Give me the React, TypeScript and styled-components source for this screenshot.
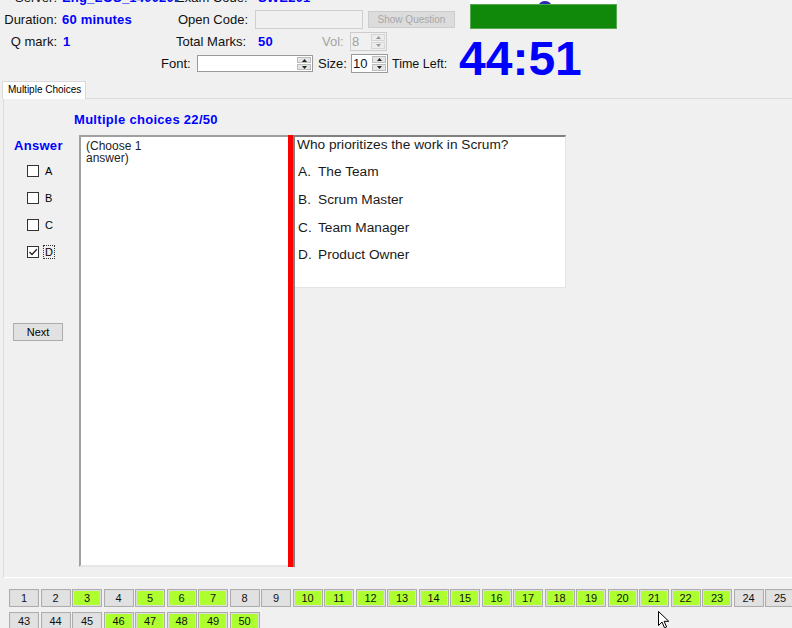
import React from "react";
import styled, { createGlobalStyle } from "styled-components";

const GlobalStyle = createGlobalStyle`
  html, body { margin: 0; padding: 0; background: #f0f0f0; }
  body { font-family: "Liberation Sans", Arial, sans-serif; color: #000; }
  * { box-sizing: border-box; }
`;

const BLUE = "#0000ff";
const LIME = "#adff2f";

const Screen = styled.div`
  position: relative;
  width: 792px;
  height: 628px;
  overflow: hidden;
  background: #f0f0f0;
  display: flex;
  flex-direction: column;
`;

const Header = styled.div`
  display: flex;
  align-items: flex-start;
  height: 89px;
  margin-top: -14px;
  flex-shrink: 0;
`;

const InfoRows = styled.div`
  width: 459px;
  display: flex;
  flex-direction: column;
  flex-shrink: 0;
`;

const InfoRow = styled.div<{ $h?: number }>`
  display: flex;
  align-items: center;
  height: ${(p) => p.$h ?? 22}px;
`;

const Label = styled.span<{ $w?: number; $right?: boolean; $muted?: boolean; $size?: number }>`
  flex-shrink: 0;
  ${(p) => (p.$w ? `width: ${p.$w}px;` : "")}
  text-align: ${(p) => (p.$right ? "right" : "left")};
  font-size: ${(p) => p.$size ?? 13}px;
  color: ${(p) => (p.$muted ? "#a3a3a3" : "#111")};
  white-space: nowrap;
`;

const Value = styled.span<{ $w?: number }>`
  flex-shrink: 0;
  ${(p) => (p.$w ? `width: ${p.$w}px;` : "")}
  font-size: 13px;
  font-weight: bold;
  color: ${BLUE};
  white-space: nowrap;
  letter-spacing: 0.2px;
`;

const Gap = styled.span<{ $w: number }>`
  flex-shrink: 0;
  width: ${(p) => p.$w}px;
`;

const TextBox = styled.div<{ $w: number; $h: number }>`
  flex-shrink: 0;
  width: ${(p) => p.$w}px;
  height: ${(p) => p.$h}px;
  background: #f0f0f0;
  border: 1px solid #cfcfcf;
`;

const FlatButton = styled.div<{ $w: number; $h: number; $disabled?: boolean }>`
  flex-shrink: 0;
  width: ${(p) => p.$w}px;
  height: ${(p) => p.$h}px;
  display: flex;
  align-items: center;
  justify-content: center;
  font-size: 10px;
  color: ${(p) => (p.$disabled ? "#a8a8a8" : "#111")};
  background: ${(p) => (p.$disabled ? "#dcdcdc" : "#e1e1e1")};
  border: 1px solid ${(p) => (p.$disabled ? "#cdcdcd" : "#adadad")};
`;

const SpinBox = styled.div<{ $w: number; $h: number; $disabled?: boolean }>`
  flex-shrink: 0;
  width: ${(p) => p.$w}px;
  height: ${(p) => p.$h}px;
  display: flex;
  background: ${(p) => (p.$disabled ? "#f0f0f0" : "#fff")};
  border: 1px solid ${(p) => (p.$disabled ? "#cccccc" : "#9a9a9a")};
`;

const SpinText = styled.span<{ $disabled?: boolean }>`
  flex: 1;
  display: flex;
  align-items: center;
  padding-left: 1px;
  font-size: 13px;
  color: ${(p) => (p.$disabled ? "#a0a0a0" : "#111")};
`;

const SpinButtons = styled.div`
  width: 15px;
  display: flex;
  flex-direction: column;
  gap: 1px;
  padding: 1px 1px 1px 0;
`;

const SpinHalf = styled.div<{ $disabled?: boolean }>`
  flex: 1;
  display: flex;
  align-items: center;
  justify-content: center;
  background: ${(p) => (p.$disabled ? "#ececec" : "#e5e5e5")};
  border: 1px solid ${(p) => (p.$disabled ? "#d6d6d6" : "#bdbdbd")};
`;

const Tri = ({ up, color }: { up: boolean; color: string }) => (
  <svg width="5" height="3" viewBox="0 0 5 3">
    {up ? <path d="M0 3 L2.5 0 L5 3 Z" fill={color} /> : <path d="M0 0 L2.5 3 L5 0 Z" fill={color} />}
  </svg>
);

const Spinner = ({ w, h, value, disabled }: { w: number; h: number; value: string; disabled?: boolean }) => (
  <SpinBox $w={w} $h={h} $disabled={disabled}>
    <SpinText $disabled={disabled}>{value}</SpinText>
    <SpinButtons>
      <SpinHalf $disabled={disabled}>
        <Tri up color={disabled ? "#9a9a9a" : "#222"} />
      </SpinHalf>
      <SpinHalf $disabled={disabled}>
        <Tri up={false} color={disabled ? "#9a9a9a" : "#222"} />
      </SpinHalf>
    </SpinButtons>
  </SpinBox>
);

const StatusColumn = styled.div`
  display: flex;
  flex-direction: column;
`;

const StatusBox = styled.div`
  margin-left: 11px;
  width: 147px;
  height: 18px;
  background: #fff;
  display: flex;
  align-items: flex-end;
  justify-content: center;
  overflow: hidden;
`;

const StatusDot = styled.span`
  width: 12px;
  height: 8px;
  margin-bottom: -5px;
  margin-left: 3px;
  border-radius: 50%;
  background: #2a2ab8;
`;

const GreenBar = styled.div`
  margin-left: 11px;
  width: 147px;
  height: 25px;
  background: #10890a;
  border: 1px solid #58a852;
`;

const Timer = styled.div`
  margin-top: 6px;
  font-size: 48px;
  line-height: 48px;
  font-weight: bold;
  color: ${BLUE};
  white-space: nowrap;
`;

const TabStrip = styled.div`
  display: flex;
  margin-top: 6px;
  padding-left: 2px;
  flex-shrink: 0;
`;

const Tab = styled.div`
  position: relative;
  z-index: 1;
  width: 84px;
  height: 18px;
  margin-bottom: -1px;
  padding: 2px 0 0 5px;
  font-size: 10px;
  background: #fff;
  border: 1px solid #d9d9d9;
  border-bottom: none;
  white-space: nowrap;
`;

const TabPanel = styled.div`
  margin-left: 3px;
  width: 800px;
  flex-shrink: 0;
  border: 1px solid #dcdcdc;
  border-bottom-color: #ffffff;
  padding: 13px 0 10px 0;
  background: #f0f0f0;
`;

const SectionTitle = styled.div`
  padding-left: 70px;
  font-size: 13px;
  line-height: 16px;
  font-weight: bold;
  letter-spacing: 0.3px;
  color: ${BLUE};
`;

const BodyRow = styled.div`
  margin-top: 7px;
  height: 432px;
  display: flex;
`;

const AnswerColumn = styled.div`
  width: 75px;
  flex-shrink: 0;
  display: flex;
  flex-direction: column;
  padding-left: 10px;
`;

const AnswerHeading = styled.div`
  margin-top: 3px;
  font-size: 13px;
  line-height: 16px;
  font-weight: bold;
  letter-spacing: 0.3px;
  color: ${BLUE};
`;

const ChoiceList = styled.div`
  margin-top: 3px;
  display: flex;
  flex-direction: column;
`;

const ChoiceItem = styled.div`
  height: 27px;
  display: flex;
  align-items: center;
  padding-left: 13px;
  gap: 6px;
  font-size: 11px;
`;

const Box = styled.span`
  width: 12px;
  height: 12px;
  border: 1px solid #333;
  background: #fff;
  display: flex;
  align-items: center;
  justify-content: center;
`;

const ChoiceLabel = styled.span<{ $focus?: boolean }>`
  line-height: 12px;
  padding: 0 1px;
  margin-left: -1px;
  outline: ${(p) => (p.$focus ? "1px dotted #333" : "none")};
`;

const NextButton = styled.div`
  margin-top: 58px;
  margin-left: -1px;
  width: 50px;
  height: 18px;
  display: flex;
  align-items: center;
  justify-content: center;
  font-size: 11px;
  background: #e1e1e1;
  border: 1px solid #adadad;
`;

const NoteArea = styled.div`
  width: 209px;
  flex-shrink: 0;
  background: #fff;
  border-top: 2px solid #a0a0a0;
  border-left: 2px solid #a0a0a0;
  border-bottom: 2px solid #e6e6e6;
  padding: 3px 5px;
  font-size: 12px;
  line-height: 12px;
  color: #222;
`;

const RedBar = styled.div`
  width: 5px;
  flex-shrink: 0;
  background: #ff0000;
`;

const QuestionArea = styled.div`
  flex: 1;
  border-left: 2px solid #808080;
  display: flex;
  align-items: flex-start;
`;

const QuestionCard = styled.div`
  width: 271px;
  height: 153px;
  background: #fff;
  border-top: 2px solid #808080;
  border-right: 1px solid #e4e4e4;
  border-bottom: 1px solid #e4e4e4;
  padding-left: 2px;
  font-size: 13.7px;
  color: #1a1a1a;
`;

const QuestionText = styled.div`
  line-height: 16px;
`;

const OptionList = styled.div`
  margin-top: 5px;
  display: flex;
  flex-direction: column;
`;

const Option = styled.div`
  height: 27.7px;
  display: flex;
  align-items: center;
`;

const OptionKey = styled.span`
  width: 21px;
  flex-shrink: 0;
  padding-left: 1px;
`;

const Nav = styled.div`
  margin-top: 11px;
  padding-left: 9px;
  display: flex;
  flex-direction: column;
  gap: 5px;
`;

const NavRow = styled.div`
  display: flex;
  gap: 1.5px;
`;

const NavButton = styled.div<{ $done?: boolean }>`
  width: 30px;
  height: 18px;
  flex-shrink: 0;
  display: flex;
  align-items: center;
  justify-content: center;
  font-size: 11px;
  color: #111;
  background: ${(p) => (p.$done ? LIME : "#e1e1e1")};
  border: 1px solid #adadad;
  box-shadow: inset 0 0 0 1px #dedede;
`;

const Cursor = styled.svg`
  position: absolute;
  left: 658px;
  top: 611px;
`;

const answered = new Set<number>([3, 5, 6, 7, 10, 11, 12, 13, 14, 15, 16, 17, 18, 19, 20, 21, 22, 23, 46, 47, 48, 49, 50]);
const row1 = Array.from({ length: 25 }, (_, i) => i + 1);
const row2 = Array.from({ length: 8 }, (_, i) => i + 43);

const choices = [
  { key: "A", checked: false },
  { key: "B", checked: false },
  { key: "C", checked: false },
  { key: "D", checked: true },
];

const options = [
  { key: "A.", text: "The Team" },
  { key: "B.", text: "Scrum Master" },
  { key: "C.", text: "Team Manager" },
  { key: "D.", text: "Product Owner" },
];

export default function App() {
  return (
    <Screen>
      <GlobalStyle />
      <Header>
        <InfoRows>
          <InfoRow>
            <Label $w={57} $right>Server:</Label>
            <Gap $w={5} />
            <Value $w={114}>Eng_LOS_140020.</Value>
            <Label $w={71} $right>Exam Code:</Label>
            <Gap $w={11} />
            <Value>SWE201</Value>
          </InfoRow>
          <InfoRow>
            <Label $w={57} $right>Duration:</Label>
            <Gap $w={5} />
            <Value $w={114}>60 minutes</Value>
            <Label $w={72} $right>Open Code:</Label>
            <Gap $w={7} />
            <TextBox $w={108} $h={19} />
            <Gap $w={5} />
            <FlatButton $w={87} $h={17} $disabled>Show Question</FlatButton>
          </InfoRow>
          <InfoRow>
            <Label $w={57} $right>Q mark:</Label>
            <Gap $w={6} />
            <Value $w={113}>1</Value>
            <Label $w={69} $right>Total Marks:</Label>
            <Gap $w={13} />
            <Value $w={64}>50</Value>
            <Label $w={20} $muted>Vol:</Label>
            <Gap $w={8} />
            <Spinner w={37} h={19} value="8" disabled />
          </InfoRow>
          <InfoRow $h={23}>
            <Gap $w={161} />
            <Label $w={30}>Font:</Label>
            <Gap $w={6} />
            <Spinner w={116} h={17} value="" />
            <Gap $w={5} />
            <Label $w={29}>Size:</Label>
            <Gap $w={4} />
            <Spinner w={37} h={19} value="10" />
            <Gap $w={4} />
            <Label $size={12.5}>Time Left:</Label>
          </InfoRow>
        </InfoRows>
        <StatusColumn>
          <StatusBox>
            <StatusDot />
          </StatusBox>
          <GreenBar />
          <Timer>44:51</Timer>
        </StatusColumn>
      </Header>

      <TabStrip>
        <Tab>Multiple Choices</Tab>
      </TabStrip>
      <TabPanel>
        <SectionTitle>Multiple choices 22/50</SectionTitle>
        <BodyRow>
          <AnswerColumn>
            <AnswerHeading>Answer</AnswerHeading>
            <ChoiceList>
              {choices.map((c) => (
                <ChoiceItem key={c.key}>
                  <Box>
                    {c.checked && (
                      <svg width="10" height="10" viewBox="0 0 10 10">
                        <path d="M1.5 5 L4 7.5 L8.8 2.2" fill="none" stroke="#222" strokeWidth="1.3" />
                      </svg>
                    )}
                  </Box>
                  <ChoiceLabel $focus={c.checked}>{c.key}</ChoiceLabel>
                </ChoiceItem>
              ))}
            </ChoiceList>
            <NextButton>Next</NextButton>
          </AnswerColumn>
          <NoteArea>
            (Choose 1
            <br />
            answer)
          </NoteArea>
          <RedBar />
          <QuestionArea>
            <QuestionCard>
              <QuestionText>Who prioritizes the work in Scrum?</QuestionText>
              <OptionList>
                {options.map((o) => (
                  <Option key={o.key}>
                    <OptionKey>{o.key}</OptionKey>
                    <span>{o.text}</span>
                  </Option>
                ))}
              </OptionList>
            </QuestionCard>
          </QuestionArea>
        </BodyRow>
      </TabPanel>

      <Nav>
        <NavRow>
          {row1.map((n) => (
            <NavButton key={n} $done={answered.has(n)}>{n}</NavButton>
          ))}
        </NavRow>
        <NavRow>
          {row2.map((n) => (
            <NavButton key={n} $done={answered.has(n)}>{n}</NavButton>
          ))}
        </NavRow>
      </Nav>

      <Cursor width="12" height="18" viewBox="0 0 12 18">
        <path d="M0.5 0.5 L0.5 14.5 L4 11 L6.5 16.8 L8.6 15.9 L6.1 10.3 L10.8 10.3 Z" fill="#fff" stroke="#000" strokeWidth="1" />
      </Cursor>
    </Screen>
  );
}
